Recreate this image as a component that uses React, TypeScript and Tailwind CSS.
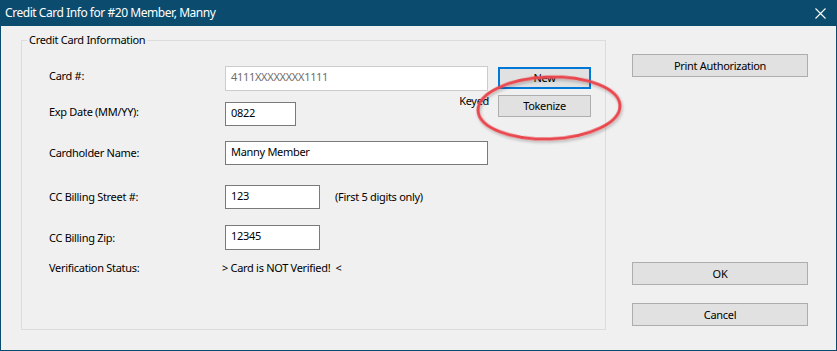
import type { ReactNode } from "react"

function Field({ w, h, children, disabled }: { w: string; h: string; children: ReactNode; disabled?: boolean }) {
  return (
    <div
      className={`${w} ${h} bg-white border pl-[5px] pt-[2px] leading-[16px] ${
        disabled ? "border-[#cccccc] text-[#6d6d6d]" : "border-[#7a7a7a] text-black"
      }`}
    >
      {children}
    </div>
  )
}

function WinButton({ children, className = "" }: { children: ReactNode; className?: string }) {
  return (
    <button
      type="button"
      className={`flex items-center justify-center bg-[#e1e1e1] border border-[#adadad] text-black leading-[16px] tracking-[-0.3px] ${className}`}
    >
      {children}
    </button>
  )
}

export default function App() {
  return (
    <div
      className="relative w-[837px] h-[351px] bg-[#0b4b6e] overflow-hidden text-[11px]"
      style={{ fontFamily: '"Noto Sans", "Open Sans", sans-serif' }}
    >
      {/* title bar */}
      <div className="h-[26px] flex items-center justify-between pl-[5px] pr-[10px] text-white">
        <span className="text-[12px] tracking-[-0.45px] leading-[16px]">Credit Card Info for #20 Member, Manny</span>
        <svg width="11" height="11" viewBox="0 0 11 11" className="mr-[1px]">
          <path d="M0.5 0.5 L10.5 10.5 M10.5 0.5 L0.5 10.5" stroke="white" strokeWidth="1.1" fill="none" />
        </svg>
      </div>

      {/* client area */}
      <div className="mx-[1px] h-[324px] bg-[#f0f0f0] flex tracking-[-0.3px]">
        {/* group box */}
        <div className="relative ml-[20px] mt-[14px] w-[585px] h-[290px] border border-[#dcdcdc]">
          <span className="absolute left-[5px] -top-[9px] px-[2px] bg-[#f0f0f0] leading-[16px] text-black">
            Credit Card Information
          </span>

          <div className="pl-[27px] pt-[25px] flex flex-col text-black">
            {/* card # */}
            <div className="flex items-start w-[542px] h-[25px]">
              <span className="w-[176px] mt-[2px] leading-[16px]">Card #:</span>
              <Field w="w-[263px]" h="h-[25px]" disabled>
                4111XXXXXXXX1111
              </Field>
              <button
                type="button"
                className="ml-[10px] mt-[1px] w-[93px] h-[22px] bg-[#e1e1e1] border-2 border-[#0078d7] flex items-center justify-center leading-[16px]"
              >
                New
              </button>
            </div>

            {/* exp date */}
            <div className="flex items-start w-[542px] mt-[4px] h-[31px]">
              <span className="w-[176px] mt-[9px] leading-[16px]">Exp Date (MM/YY):</span>
              <div className="mt-[7px]">
                <Field w="w-[71px]" h="h-[24px]">0822</Field>
              </div>
              <span className="flex-1 text-right pr-[9px] -mt-[2px] leading-[16px]">Keyed</span>
              <WinButton className="w-[93px] h-[22px]">Tokenize</WinButton>
            </div>

            {/* cardholder */}
            <div className="flex items-start mt-[15px]">
              <span className="w-[176px] mt-[4px] leading-[16px]">Cardholder Name:</span>
              <Field w="w-[263px]" h="h-[24px]">Manny Member</Field>
            </div>

            {/* street */}
            <div className="flex items-start mt-[20px]">
              <span className="w-[176px] mt-[4px] leading-[16px]">CC Billing Street #:</span>
              <Field w="w-[95px]" h="h-[24px]">123</Field>
              <span className="ml-[15px] mt-[4px] leading-[16px]">(First 5 digits only)</span>
            </div>

            {/* zip */}
            <div className="flex items-start mt-[16px]">
              <span className="w-[176px] mt-[5px] leading-[16px]">CC Billing Zip:</span>
              <Field w="w-[95px]" h="h-[25px]">12345</Field>
            </div>

            {/* verification */}
            <div className="flex items-start mt-[10px]">
              <span className="w-[173px] leading-[16px]">Verification Status:</span>
              <span className="leading-[16px]">&gt; Card is NOT Verified!&nbsp; &lt;</span>
            </div>
          </div>
        </div>

        {/* right column */}
        <div className="ml-[26px] flex flex-col w-[176px]">
          <WinButton className="mt-[28px] h-[23px]">Print Authorization</WinButton>
          <WinButton className="mt-[185px] h-[23px]">OK</WinButton>
          <WinButton className="mt-[18px] h-[23px]">Cancel</WinButton>
        </div>
      </div>

      {/* red annotation ellipse */}
      <svg className="absolute left-0 top-0 pointer-events-none" width="837" height="351">
        <defs>
          <filter id="sh" x="-20%" y="-30%" width="140%" height="170%">
            <feDropShadow dx="1" dy="2" stdDeviation="1.5" floodColor="#000" floodOpacity="0.25" />
          </filter>
        </defs>
        <ellipse
          cx="549"
          cy="108"
          rx="71"
          ry="31"
          transform="rotate(-2 549 108)"
          fill="none"
          stroke="#e9464d"
          strokeWidth="3"
          filter="url(#sh)"
        />
      </svg>
    </div>
  )
}
